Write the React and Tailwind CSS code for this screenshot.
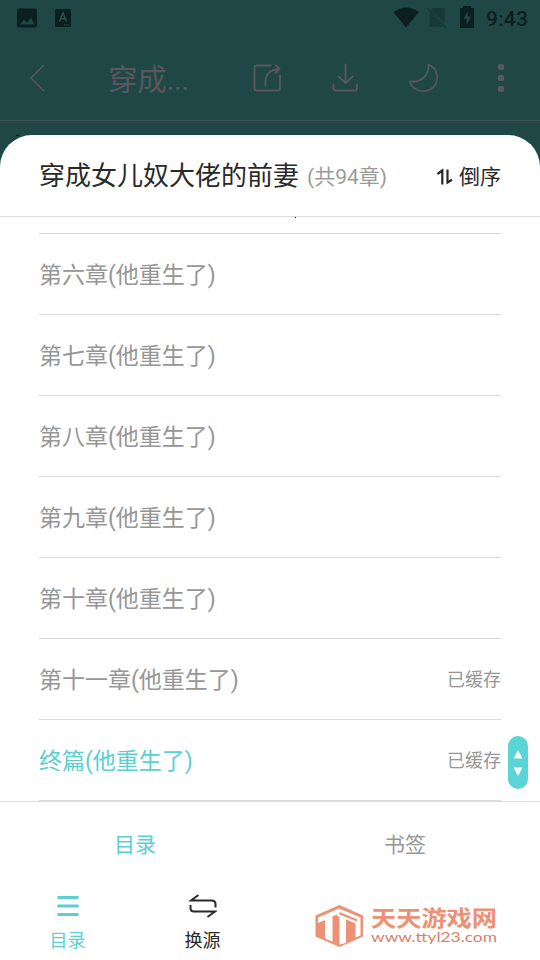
const chapters = [
  { title: '第六章(他重生了)' },
  { title: '第七章(他重生了)' },
  { title: '第八章(他重生了)' },
  { title: '第九章(他重生了)' },
  { title: '第十章(他重生了)' },
  { title: '第十一章(他重生了)', cached: true },
  { title: '终篇(他重生了)', cached: true, active: true },
];

const StatusBar = () => (
  <div className="flex h-9 items-center justify-between pl-4 pr-3 text-[#0b1f20]">
    <div className="flex items-center gap-[17px]">
      <svg width="22" height="22" viewBox="0 0 22 22">
        <rect x="1" y="1.500" width="20" height="19" rx="2" fill="currentColor" />
        <path d="M4 17.500l4-5 3 3.500 4-5.500 3.500 7z" fill="#1e4746" />
      </svg>
      <svg width="18" height="22" viewBox="0 0 18 22">
        <rect x="0" y="2" width="16" height="18" rx="1.500" fill="currentColor" />
        <path d="M4.500 14.500L8 6l3.500 8.500M5.800 11.800h4.400" fill="none" stroke="#28504f" strokeWidth="1.500" />
        <path d="M9 18h1.500M11.500 18h1M13.500 18h1" stroke="#28504f" />
      </svg>
    </div>
    <div className="flex items-center">
      <svg width="27" height="22" viewBox="0 0 27 22" className="mr-[7px]">
        <path d="M0.500 5Q13 -4 26 5L13 20.500z" fill="currentColor" />
      </svg>
      <svg width="20" height="22" viewBox="0 0 20 22" className="mr-3">
        <path d="M6 1h10q1.500 0 1.500 1.500V16L4 3zM3 6l14 14H4q-1.500 0-1.500-1.500z" fill="#153938" />
        <path d="M0.500 1.500L19 20.500" stroke="#153938" strokeWidth="1.500" />
      </svg>
      <svg width="16" height="24" viewBox="0 0 16 24" className="mr-[11px] -mt-0.5">
        <path d="M4 1h8v2h3v20H1V3h3z" fill="currentColor" />
        <path d="M8.800 6L4.500 14H7.500v6L12 11.500H8.800z" fill="#1e4746" />
      </svg>
      <span className="w-[42px] whitespace-nowrap pt-px font-[Roboto] text-[21px] font-medium leading-6 tracking-[0.2px]">9:43</span>
    </div>
  </div>
);

const ReaderBar = () => (
  <div className="flex h-[85px] items-center border-b border-[#444e50] pl-[29px] text-[#59575d]">
    <svg width="16" height="28" viewBox="0 0 16 28" fill="none" stroke="currentColor" strokeWidth="1.500">
      <path d="M15 1L2 14L15 27" />
    </svg>
    <h1 className="ml-[63px] w-[144px] pt-[3px] text-[29.500px] leading-9 tracking-[-0.3px]">穿成...</h1>
    <svg width="30" height="30" viewBox="0 0 30 30" fill="none" stroke="currentColor" strokeWidth="1.900" strokeLinecap="round" strokeLinejoin="round">
      <path d="M18.500 2.500H4.500Q2.500 2.500 2.500 4.500V25.500Q2.500 27.500 4.500 27.500H26Q28 27.500 28 25.500V13" />
      <path d="M13.500 22.500C12.500 11 18 6.500 27.500 6M23.500 2L27.500 6L23.500 10" />
    </svg>
    <svg width="28" height="30" viewBox="0 0 28 30" fill="none" stroke="currentColor" strokeWidth="1.900" strokeLinecap="round" strokeLinejoin="round" className="ml-[49px]">
      <path d="M14.500 1.500V20M7.500 13.500L14.500 20L21.500 13.500" />
      <path d="M2.500 21.500V25Q2.500 27.500 4.500 27.500H24Q26 27.500 26 25V21.500" />
    </svg>
    <svg width="31" height="30" viewBox="0 0 31 30" fill="none" stroke="currentColor" strokeWidth="1.700" strokeLinejoin="round" className="ml-[49px]">
      <path d="M20.500 1.500C31.500 6 32 21 22 26.500C14 30.500 4 27 1.500 18.500C13 20 21.500 12 20.500 1.500Z" />
    </svg>
    <svg width="8" height="30" viewBox="0 0 8 30" className="ml-[58px]" fill="currentColor">
      <circle cx="4" cy="4" r="3.200" />
      <rect x="1" y="12" width="6" height="6" rx="1.500" />
      <rect x="1" y="23" width="6" height="6" rx="1.500" />
    </svg>
  </div>
);

const SheetHeader = () => (
  <div className="flex h-[82px] shrink-0 items-center border-b border-[#dedede] px-[39px]">
    <h2 className="pt-px text-[26px] leading-9 text-[#292929]">穿成女儿奴大佬的前妻</h2>
    <span className="ml-2 pt-[3px] text-[21px] leading-8 text-[#9b9b9b]">(共94章)</span>
    <button className="ml-auto flex items-center pt-[3px] text-[21px] leading-8 text-[#292929]">
      <svg width="18" height="18" viewBox="0 0 18 18" fill="none" stroke="currentColor" strokeWidth="2.200" className="mr-[5px]">
        <path d="M1.500 6L6.300 2.500V16.500" />
        <path d="M11.500 1.500V14.500L16 11.800" />
      </svg>
      倒序
    </button>
  </div>
);

const ChapterRow = ({ title, cached, active }) => (
  <li className="flex h-[81px] items-center justify-between border-b border-[#dbdbdb]">
    <span className={`pt-1 text-[23px] leading-8 ${active ? 'text-[#5bd0d0]' : 'text-[#969696]'}`}>{title}</span>
    {cached && <span className="pt-px text-[18px] leading-7 text-[#969696]">已缓存</span>}
  </li>
);

const SiteLogo = () => (
  <svg width="184" height="44" viewBox="0 0 184 44" fill="#ec9175">
    <path d="M24.500 0L48 10.500V31.500L24.500 42L0.500 31.500V10.500z" />
    {/* left T */}
    <path d="M3 12.500L24 3.500V8.500L17.500 11.500V36.500L10 33.500V15L3 18z" fill="#fff" />
    {/* right T with its side face */}
    <path d="M24 3.500L45.500 12.500V30.500L40.500 32.500V18.500L31 14.500V38L24.500 39.500V12L22 11V9.500L24 8.500z" fill="#fff" />
    <path d="M24.500 7L42 14.200V16.500L24.500 9.500z" />
    <path d="M31 14.800L38 17.500V33.500L31 36.800z" />
    <text x="56" y="21" fontSize="22" fontWeight="700" textLength="126" lengthAdjust="spacingAndGlyphs">天天游戏网</text>
    <text x="56" y="36.500" fontSize="14" fontFamily="Lato, sans-serif" textLength="126" lengthAdjust="spacingAndGlyphs" fill="#dc8069">www.ttyl23.com</text>
  </svg>
);

export default function App() {
  return (
    <div className="relative flex h-[960px] w-[540px] flex-col overflow-hidden bg-[#1e4746] font-[Roboto,'Noto_Sans_CJK_SC',sans-serif]">
      <StatusBar />
      <ReaderBar />
      <div className="ml-4 mt-3.5 -mb-px h-px w-[3px] bg-black" />

      <section className="flex flex-1 flex-col rounded-t-[32px] bg-white">
        <SheetHeader />
        <div className="flex h-[584px] flex-col px-[39px]">
          <div className="h-[17px] border-b border-[#dbdbdb]">
            <div className="ml-[256px] h-px w-px bg-black" />
          </div>
          <ul>
            {chapters.map((c) => (
              <ChapterRow key={c.title} {...c} />
            ))}
          </ul>
        </div>

        <div className="flex h-[84px] items-center border-t border-[#dedede] text-[21px] leading-8">
          <button className="flex-1 pt-0.5 text-[#5bd0d0]">目录</button>
          <button className="flex-1 pt-0.5 text-[#969696]">书签</button>
        </div>

        <nav className="flex flex-1 text-[18px] leading-7">
          <button className="flex w-[135px] flex-col items-center pt-2 text-[#5bd0d0]">
            <svg width="24" height="26" viewBox="0 0 24 26" stroke="currentColor" strokeWidth="2.800" strokeLinecap="round">
              <path d="M2.500 4.500H21.500M2.500 13H21.500M2.500 21.500H21.500" />
            </svg>
            <span className="mt-2">目录</span>
          </button>
          <button className="flex w-[135px] flex-col items-center pt-2 text-[#292929]">
            <svg width="28" height="26" viewBox="0 0 28 26" fill="none" stroke="currentColor" strokeWidth="2">
              <path d="M9.500 2L2 7.500H22.500Q26.500 7.500 26.500 11V14.500" />
              <path d="M1.500 12V15Q1.500 18.500 5 18.500H26L18.500 24" />
            </svg>
            <span className="mt-2">换源</span>
          </button>
          <div className="ml-[45px] mt-5">
            <SiteLogo />
          </div>
        </nav>
      </section>

      {/* Scroll handle, floats over the chapter list */}
      <div className="absolute left-[508px] top-[736px] flex h-[53px] w-5 flex-col items-center justify-center rounded-full bg-[#5ad4d4]">
        <svg width="10" height="26" viewBox="0 0 10 26" fill="#fff">
          <path d="M5 0L9.500 8.500H0.500zM0.500 17.500H9.500L5 26z" />
        </svg>
      </div>
    </div>
  );
}
